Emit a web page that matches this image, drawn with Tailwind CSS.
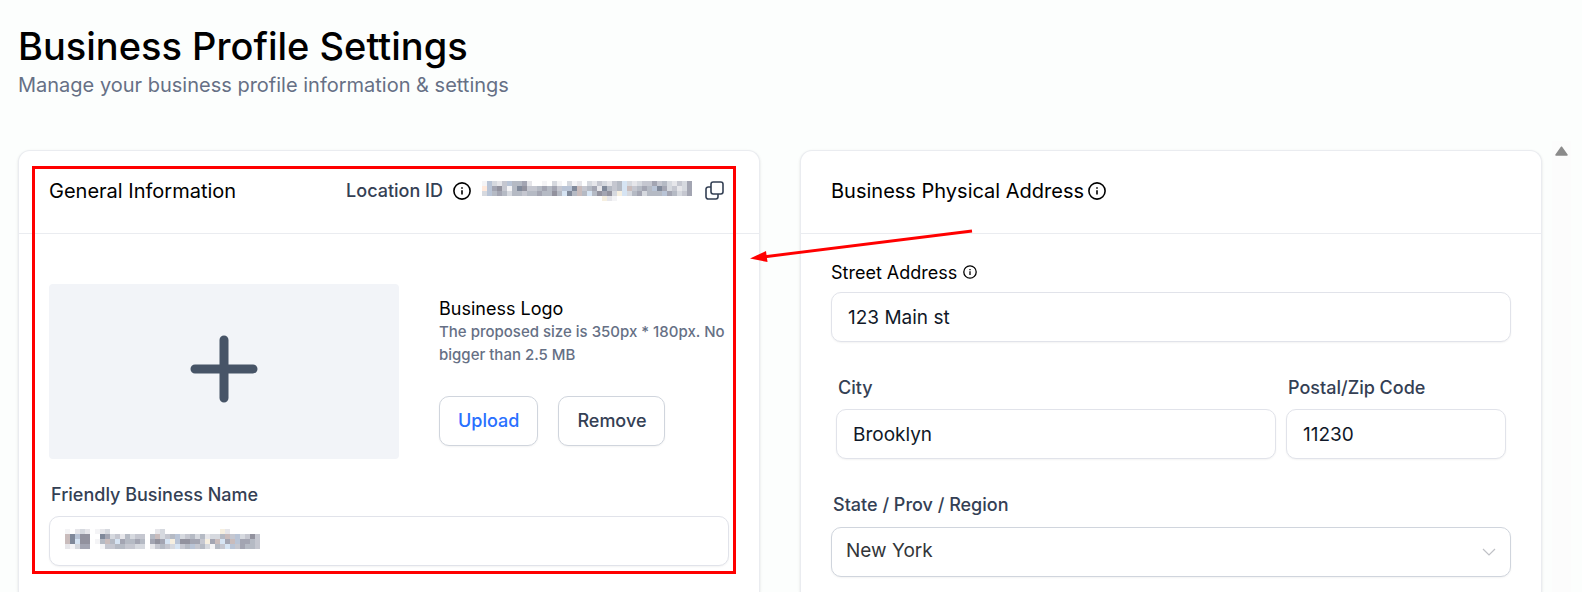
<!DOCTYPE html>
<html lang="en">
<head>
    <meta charset="UTF-8">
    <meta name="viewport" content="width=device-width, initial-scale=1.0">
    <title>Business Profile Settings</title>
    <script src="https://cdn.jsdelivr.net/npm/@tailwindcss/browser@4"></script>
</head>
<body class="bg-[#fcfefd] font-['Inter',sans-serif] text-black">

    <div class="h-screen flex flex-col overflow-hidden">

        <header class="pl-[18px] pt-[23px] pb-[41px]">
            <h1 class="text-[38px] leading-[47px] font-medium">Business Profile Settings</h1>
            <p class="text-xl leading-[30px] text-[#667085]">Manage your business profile information &amp; settings</p>
        </header>

        <div class="flex-1 min-h-0 flex gap-[10px] pl-[18px] pr-[11px]">

            <main class="relative flex-1 grid grid-cols-2 gap-10 pt-[9px] min-w-0">

                <!-- General information -->
                <section class="relative bg-white border border-b-0 border-[#eaecf0] rounded-t-xl shadow-sm min-w-0">
                    <div class="h-[83px] px-[30px] flex items-start justify-between pt-[25px] border-b border-[#eaecf0]">
                        <h2 class="text-xl leading-[30px]">General Information</h2>
                        <div class="flex items-center h-[30px] text-lg font-medium text-[#344054]">
                            <span>Location ID</span>
                            <svg class="ml-[10px] size-[18px] text-black" viewBox="0 0 18 18" fill="none" stroke="currentColor" stroke-width="1.6"><circle cx="9" cy="9" r="8.1"/><path d="M9 8.3v4.2M9 5.3v1.5"/></svg>
                            <svg id="location-id" class="ml-[11px] w-[215px] h-5" viewBox="0 0 215 20" shape-rendering="crispEdges" role="img" aria-label="Hidden ID"></svg>
                            <button type="button" aria-label="Copy location ID" class="ml-2 mr-[5px] mb-[2px]">
                                <svg class="size-[19px]" viewBox="0 0 19 19" fill="none" stroke="currentColor" stroke-width="1.6" stroke-linejoin="round"><rect x="6" y="1" width="12" height="12" rx="2.2"/><path d="M6 6H3.2A2.2 2.2 0 0 0 1 8.2v7.6A2.2 2.2 0 0 0 3.2 18h7.6a2.2 2.2 0 0 0 2.2-2.2V13"/></svg>
                            </button>
                        </div>
                    </div>

                    <div class="px-[30px] pt-[50px]">
                        <div class="flex gap-10">
                            <div class="w-[350px] h-[175px] shrink-0 rounded bg-[#f2f4f8] flex items-center justify-center">
                                <svg class="size-[68px] mb-[6px]" viewBox="0 0 68 68" stroke="#475467" stroke-width="9" stroke-linecap="round"><path d="M34 5v58M5 34h58"/></svg>
                            </div>
                            <div class="pt-[13px]">
                                <h3 class="text-lg leading-[23px]">Business Logo</h3>
                                <p class="text-[15px] leading-[23px] font-medium text-[#667085]">The proposed size is 350px * 180px. No bigger than 2.5 MB</p>
                                <div class="flex gap-5 mt-[30px]">
                                    <button type="button" class="h-[50px] px-[18px] border border-[#d0d5dd] rounded-[10px] bg-white shadow-xs text-lg font-medium text-[#2970ff]">Upload</button>
                                    <button type="button" class="h-[50px] px-[18px] border border-[#d0d5dd] rounded-[10px] bg-white shadow-xs text-lg font-medium text-[#344054]">Remove</button>
                                </div>
                            </div>
                        </div>

                        <label for="business-name" class="block mt-[22px] ml-[2px] text-lg leading-[28px] font-medium text-[#344054]">Friendly Business Name</label>
                        <div class="relative mt-[7px]">
                            <input id="business-name" type="text" class="block w-full h-[50px] px-4 border border-[#e1e3ea] rounded-[10px] bg-white shadow-xs text-[19px] text-[#101828]">
                            <svg id="name-mask" class="absolute left-4 top-[13px] w-[195px] h-5 pointer-events-none" viewBox="0 0 195 20" shape-rendering="crispEdges"></svg>
                        </div>
                    </div>

                    <!-- Highlight frame -->
                    <div class="absolute left-[13px] right-[23px] top-[15px] h-[408px] border-3 border-[#ff0000] pointer-events-none"></div>
                </section>

                <!-- Physical address -->
                <section class="bg-white border border-b-0 border-[#eaecf0] rounded-t-xl shadow-sm min-w-0">
                    <div class="h-[83px] px-[30px] flex items-start pt-[25px] border-b border-[#eaecf0]">
                        <h2 class="text-xl leading-[30px]">Business Physical Address</h2>
                        <svg class="ml-1 mt-[6px] size-[18px]" viewBox="0 0 18 18" fill="none" stroke="currentColor" stroke-width="1.6"><circle cx="9" cy="9" r="8.1"/><path d="M9 8.3v4.2M9 5.3v1.5"/></svg>
                    </div>

                    <div class="px-[30px] pt-[25px]">
                        <div class="flex items-center">
                            <label for="street" class="text-lg leading-[28px]">Street Address</label>
                            <svg class="ml-[6px] mb-[3px] size-[14px]" viewBox="0 0 14 14" fill="none" stroke="currentColor" stroke-width="1.3"><circle cx="7" cy="7" r="6.2"/><path d="M7 6.3v3.7M7 4v1.2"/></svg>
                        </div>
                        <input id="street" type="text" value="123 Main st" class="block w-full mt-[5px] h-[50px] px-4 border border-[#e1e3ea] rounded-[10px] bg-white shadow-xs text-[19px] text-[#101828]">

                        <div class="flex gap-[10px] px-[5px] mt-[32px]">
                            <div class="flex-[2] min-w-0">
                                <label for="city" class="block ml-[2px] text-lg leading-[28px] font-medium text-[#344054]">City</label>
                                <input id="city" type="text" value="Brooklyn" class="block w-full mt-[7px] h-[50px] px-4 border border-[#e1e3ea] rounded-[10px] bg-white shadow-xs text-[19px] text-[#101828]">
                            </div>
                            <div class="flex-1 min-w-0">
                                <label for="zip" class="block ml-[2px] text-lg leading-[28px] font-medium text-[#344054]">Postal/Zip Code</label>
                                <input id="zip" type="text" value="11230" class="block w-full mt-[7px] h-[50px] px-4 border border-[#e1e3ea] rounded-[10px] bg-white shadow-xs text-[19px] text-[#101828]">
                            </div>
                        </div>

                        <label for="state" class="block mt-8 ml-[2px] text-lg leading-[28px] font-medium text-[#344054]">State / Prov / Region</label>
                        <div class="relative mt-2">
                            <select id="state" class="block w-full h-[50px] appearance-none px-[14px] pb-[2px] border border-[#d0d5dd] rounded-[10px] bg-white shadow-xs text-[19px] text-[#333639]">
                                <option>New York</option>
                            </select>
                            <svg class="absolute right-[15px] top-[21px] w-[14px] h-[9px] pointer-events-none" viewBox="0 0 14 9" fill="none" stroke="#bfc1c6" stroke-width="1.2"><path d="M1 1l6 6 6-6"/></svg>
                        </div>
                    </div>
                </section>

                <!-- Arrow to the highlighted section -->
                <svg class="absolute left-[calc(50%-31px)] top-[85px] w-[226px] h-[40px] pointer-events-none" viewBox="0 0 226 40" fill="#ff0000"><path d="M223 5L14 31" stroke="#ff0000" stroke-width="2.8"/><path d="M1 32.500l16-7.500 1.500 11z"/></svg>
            </main>

            <!-- Scrollbar -->
            <div class="w-[19px] bg-[#fcfcfc] pt-[5px] flex justify-center">
                <svg class="w-[13px] h-[10px]" viewBox="0 0 13 10" fill="#8b8b8b" stroke="#8b8b8b" stroke-width="1.5" stroke-linejoin="round"><path d="M6.5 1.2L12 9H1z"/></svg>
            </div>
        </div>
    </div>

    <script>
        // each letter is one 5px block of the masked text
        const shades = {
            a: '#f4f4f6', b: '#e6e6ea', c: '#d6d9df', d: '#c5c7d0', e: '#b5bac4',
            f: '#a3a5b2', g: '#92929e', h: '#80899a', r: '#c9bcbc', p: '#ffe9dc',
            s: '#d6e4f3', t: '#b9c4d6', y: '#f6efe0'
        };

        function drawMask(id, rows) {
            document.getElementById(id).innerHTML = rows.map((row, y) =>
                [...row].map((c, x) => shades[c]
                    ? `<rect x="${x * 5}" y="${y * 5}" width="5" height="5" fill="${shades[c]}"/>`
                    : '').join('')
            ).join('');
        }

        drawMask('location-id', [
            'atcbdteefb  a ca cab cbdcbdescbcddfdecbdcf',
            'ptfgdaehgddefefdtthrdefbhedesrdefethfcdbcf',
            'ctefeceedeefeegesheresegfgcyscefceeetfecdf',
            '                        yba           '
        ]);
        drawMask('name-mask', [
            'a bcb abc         bc           yb      ',
            'rhtgg  hfcdbecdd ercdetcdecebccerdtcdgd',
            'rhsgg aeresfeefe fgfsytggffdyfrsfrtffed',
            'bacff  addeeddcc bdedcsdetdecaedstdfeed'
        ]);
    </script>

</body>
</html>
